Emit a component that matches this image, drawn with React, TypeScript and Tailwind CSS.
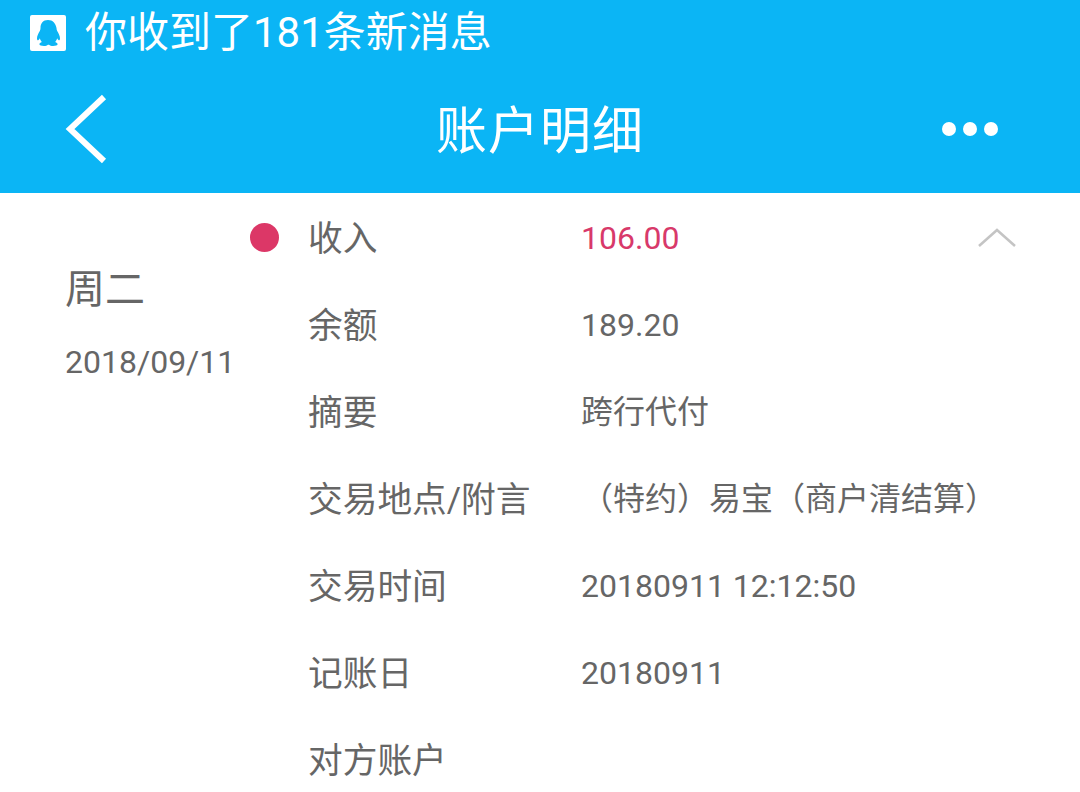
const FONT = "font-['Roboto','Noto_Sans_CJK_SC',sans-serif]";

/* label / value rows of the detail list */
const rows = [
  { label: '收入', value: '106.00', valueClass: 'text-[#d8396a]' },
  { label: '余额', value: '189.20' },
  { label: '摘要', value: '跨行代付' },
  { label: '交易地点/附言', value: '（特约）易宝（商户清结算）' },
  { label: '交易时间', value: '20180911 12:12:50' },
  { label: '记账日', value: '20180911' },
  { label: '对方账户', value: '' },
];

function QQIcon() {
  return (
    <div className="w-9 h-9 bg-white rounded-[2px] flex items-center justify-center">
      <svg width="26" height="28" viewBox="0 0 26 28" fill="#0bb5f5">
        <path d="M13 1C8 1 5.500 4.500 5.500 9c0 1-.2 2-.7 3-1.400 2.300-2.800 5-2.800 7.500 0 1.500.6 2 1.200 1.700.6-.3 1.200-1 1.700-2 .3 1.600 1 2.800 2 3.800-1.500.5-2.500 1.300-2.500 2.300 0 1.300 2 1.700 4.500 1.700 1.800 0 3.200-.5 4.100-1.300h1c.9.800 2.300 1.300 4.100 1.300 2.500 0 4.500-.4 4.500-1.700 0-1-1-1.800-2.500-2.300 1-1 1.700-2.200 2-3.800.5 1 1.100 1.700 1.700 2 .6.300 1.200-.2 1.200-1.700 0-2.500-1.400-5.200-2.800-7.500-.5-1-.7-2-.7-3C20.500 4.500 18 1 13 1z" />
      </svg>
    </div>
  );
}

export default function App() {
  return (
    <div className={`w-[1080px] h-[792px] overflow-hidden bg-white flex flex-col ${FONT}`}>
      <div className="h-[193px] shrink-0 bg-[#0bb5f5] text-white flex flex-col">
        <div className="h-[66px] flex items-center pl-[30px] gap-[19px]">
          <QQIcon />
          <span className="text-[42px] leading-none">你收到了181条新消息</span>
        </div>
        <div className="flex-1 grid grid-cols-[1fr_auto_1fr] items-center">
          <div className="pl-[64px] -mt-[2px]">
            <svg className="block" width="44" height="70" viewBox="0 0 44 70" fill="none" stroke="white" strokeWidth="6">
              <path d="M40 3 L6 35 L40 67" />
            </svg>
          </div>
          <span className="text-[51px] leading-none tracking-[1px] mt-[3px]">账户明细</span>
          <div className="flex items-center justify-end gap-[7px] pr-[82px] -mt-[2px]">
            <span className="w-[14px] h-[14px] rounded-full bg-white" />
            <span className="w-[14px] h-[14px] rounded-full bg-white" />
            <span className="w-[14px] h-[14px] rounded-full bg-white" />
          </div>
        </div>
      </div>

      <div className="flex-1 flex text-[#666666]">
        <div className="w-[250px] shrink-0 pl-[65px] pt-[72px]">
          <div className="text-[40px] leading-[50px]">周二</div>
          <div className="text-[32px] leading-[40px] mt-[27px] whitespace-nowrap">2018/09/11</div>
        </div>
        <div className="w-[58px] shrink-0 pt-[30px]">
          <span className="block w-[29px] h-[29px] rounded-full bg-[#dc3767]" />
        </div>
        <div className="flex-1 flex flex-col pt-[3px] relative">
          {rows.map((row) => (
            <div key={row.label} className="h-[87px] flex items-center text-[34.7px] shrink-0">
              <span className="w-[273px] shrink-0 whitespace-nowrap">{row.label}</span>
              <span className={`whitespace-nowrap text-[32px] pb-[4px] ${row.valueClass ?? ''}`}>{row.value}</span>
            </div>
          ))}
          <svg className="absolute left-[670px] top-[35px]" width="38" height="20" viewBox="0 0 38 20" fill="none" stroke="#c4c4c4" strokeWidth="2.500">
            <path d="M1 18 L19 2 L37 18" />
          </svg>
        </div>
      </div>
    </div>
  );
}
